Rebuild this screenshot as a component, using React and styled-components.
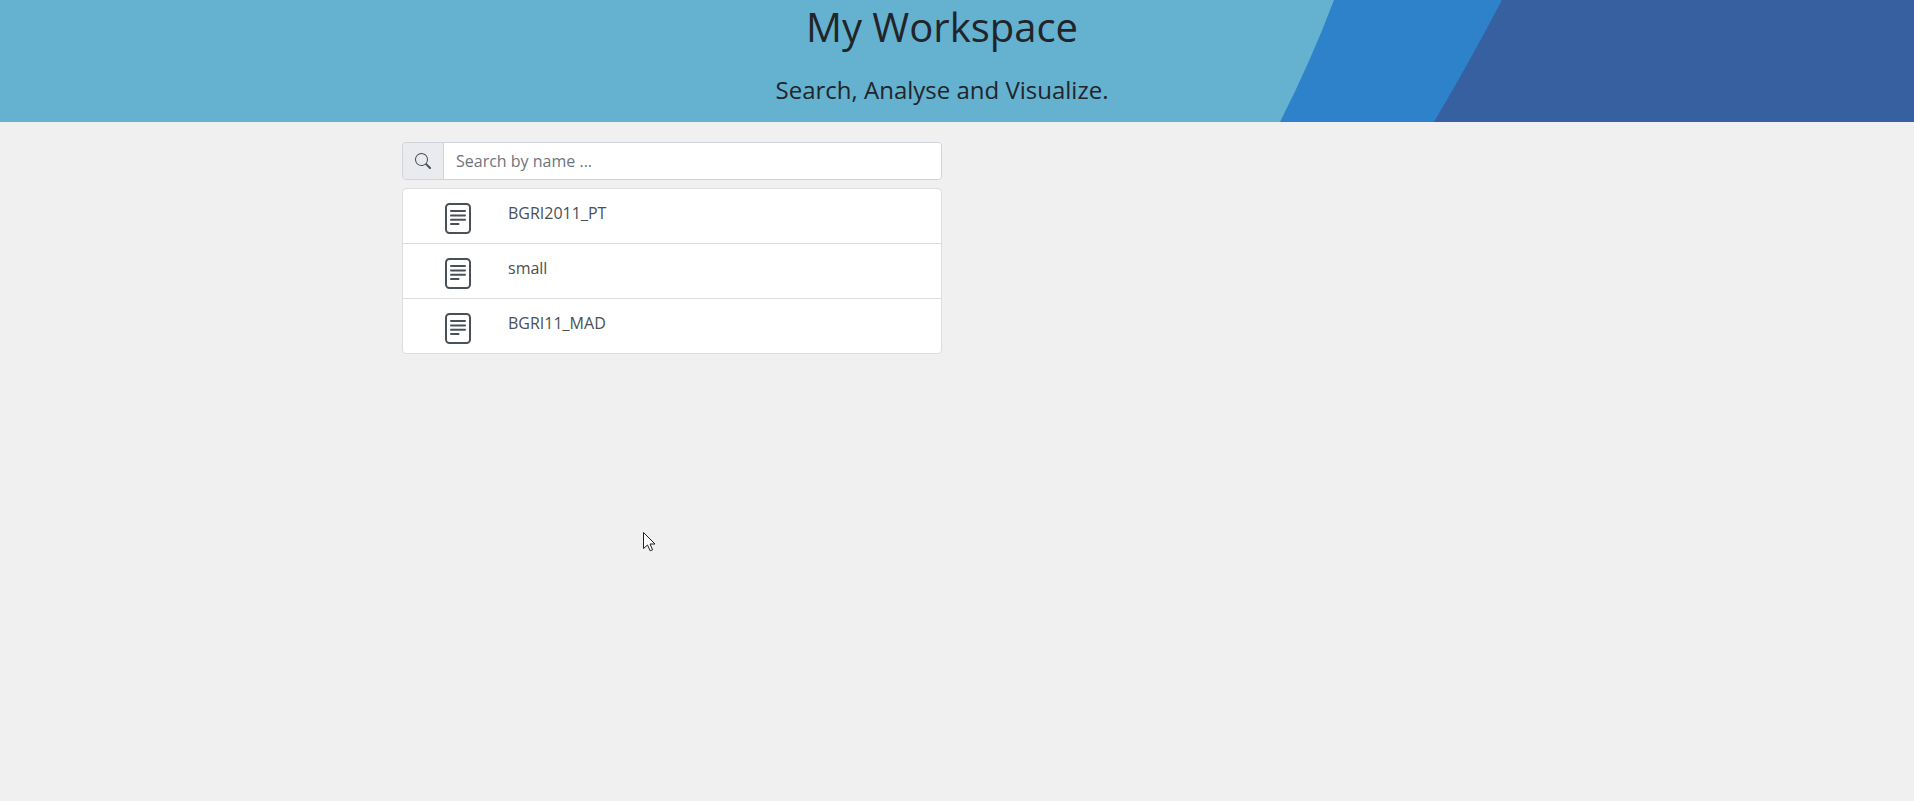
import React, { useState } from "react";
import styled, { createGlobalStyle } from "styled-components";

const GlobalStyle = createGlobalStyle`
  *, *::before, *::after { box-sizing: border-box; }
  body {
    margin: 0;
    background: #f0f0f0;
    color: #212529;
    font: 400 16px/24px "Open Sans", "Noto Sans", sans-serif;
  }
`;

const Banner = styled.header`
  position: relative;
  overflow: hidden;
  padding: 3px 30px 15px 0;
  background: #65b1d0;
  text-align: center;
`;

const Waves = styled.svg`
  position: absolute;
  top: 0;
  right: 0;
  width: 640px;
  height: 100%;
`;

const Title = styled.h1`
  position: relative;
  margin: 0 0 22px;
  font-size: 40px;
  font-weight: 400;
  line-height: 48px;
`;

const Lead = styled.p`
  position: relative;
  margin: 0;
  font-size: 24px;
  line-height: 34px;
`;

const Container = styled.main`
  max-width: 1140px;
  margin: 0 auto;
  padding-top: 20px;
`;

const Column = styled.section`
  width: 50%;
  padding: 0 15px;
`;

const SearchGroup = styled.div`
  display: flex;
  height: 38px;
  margin-bottom: 8px;
  border: 1px solid #ced4da;
  border-radius: 4px;
  overflow: hidden;
`;

const SearchLabel = styled.label`
  display: flex;
  align-items: center;
  padding: 0 12px;
  border-right: 1px solid #ced4da;
  background: #e9ebef;
  color: #495057;
`;

const SearchInput = styled.input`
  flex: 1;
  min-width: 0;
  padding: 0 12px;
  border: 0;
  outline: 0;
  background: #fff;
  color: #495057;
  font: inherit;

  &::placeholder {
    color: #6c757d;
    opacity: 1;
  }
`;

const FileList = styled.ul`
  margin: 0;
  padding: 0;
  list-style: none;
  border: 1px solid #dcdddd;
  border-radius: 4px;
  background: #fff;
  overflow: hidden;
`;

const FileItem = styled.li`
  & + & {
    border-top: 1px solid #dcdddd;
  }
`;

const FileLink = styled.a`
  display: flex;
  height: 54px;
  padding: 12px 42px;
  gap: 37px;
  color: #495057;
  text-decoration: none;
`;

const FileSymbol = styled.svg`
  flex: none;
  width: 26px;
  height: 31px;
  margin-top: 2px;
`;

const Pointer = styled.svg`
  position: absolute;
  left: 643px;
  top: 531px;
  pointer-events: none;
`;

const files = ["BGRI2011_PT", "small", "BGRI11_MAD"];

function SearchIcon() {
  return (
    <svg width="16" height="16" viewBox="0 0 16 16" fill="currentColor" aria-hidden="true">
      <path d="M11.742 10.344a6.5 6.5 0 1 0-1.397 1.398h-.001c.03.04.062.078.098.115l3.85 3.85a1 1 0 0 0 1.415-1.414l-3.85-3.85a1.007 1.007 0 0 0-.115-.1zM12 6.5a5.5 5.5 0 1 1-11 0 5.5 5.5 0 0 1 11 0z" />
    </svg>
  );
}

function FileIcon() {
  return (
    <FileSymbol viewBox="0 0 26 31" fill="none" stroke="#495057" strokeWidth="2" aria-hidden="true">
      <rect x="1" y="1" width="24" height="29" rx="3.5" />
      <path d="M6 8h14M6 12.4h14M6 16.7h14M6 21h7.5" strokeLinecap="round" />
    </FileSymbol>
  );
}

export default function App() {
  const [query, setQuery] = useState("");
  const shown = files.filter((name) => name.toLowerCase().includes(query.toLowerCase()));

  return (
    <>
      <GlobalStyle />
      <Banner>
        <Waves viewBox="0 0 640 122" preserveAspectRatio="none" aria-hidden="true">
          <path d="M60 0Q37 61 6 122H640V0Z" fill="#2d82c9" />
          <path d="M228 0Q196 61 160 122H640V0Z" fill="#36609f" />
        </Waves>
        <Title>My Workspace</Title>
        <Lead>Search, Analyse and Visualize.</Lead>
      </Banner>
      <Container>
        <Column>
          <SearchGroup>
            <SearchLabel htmlFor="file-search" aria-label="Search by name">
              <SearchIcon />
            </SearchLabel>
            <SearchInput
              id="file-search"
              type="text"
              placeholder="Search by name ..."
              value={query}
              onChange={(event) => setQuery(event.target.value)}
            />
          </SearchGroup>
          <FileList>
            {shown.map((name) => (
              <FileItem key={name}>
                <FileLink href={`#${name}`}>
                  <FileIcon />
                  {name}
                </FileLink>
              </FileItem>
            ))}
          </FileList>
        </Column>
      </Container>
      <Pointer width="13" height="21" viewBox="0 0 13 21" aria-hidden="true">
        <path
          d="M.5 1.5V17.5L4.5 14L7.2 19.8L9.6 18.8L7 13H12Z"
          fill="#fff"
          stroke="#1c1f26"
        />
      </Pointer>
    </>
  );
}
